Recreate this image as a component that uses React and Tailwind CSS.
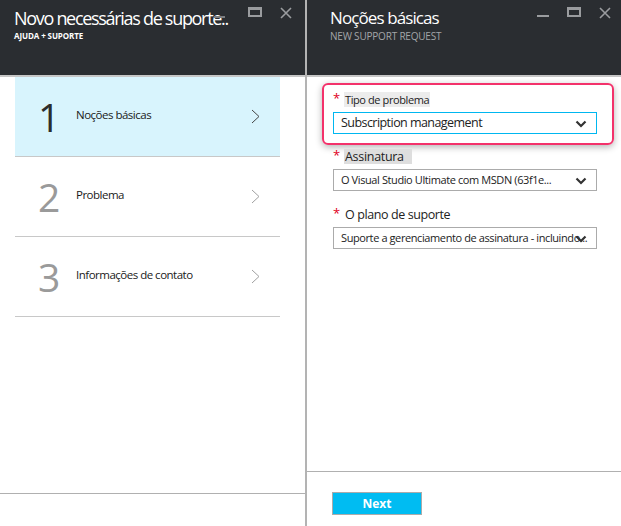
const STEPS = [
  { n: "1", label: "Noções básicas", active: true },
  { n: "2", label: "Problema" },
  { n: "3", label: "Informações de contato" },
];

const FONT = { fontFamily: '"Open Sans", "Noto Sans", sans-serif' };

function Chevron({ dim }) {
  return (
    <svg width="9" height="15" viewBox="0 0 9 15" className={dim ? "text-[#a0a0a0]" : "text-[#444]"}>
      <polyline points="1,1 8,7.5 1,14" fill="none" stroke="currentColor" strokeWidth="1" />
    </svg>
  );
}

function DownArrow() {
  return (
    <svg width="12" height="8" viewBox="0 0 12 8" className="text-[#333]">
      <polyline points="1.5,1.5 6,6 10.5,1.5" fill="none" stroke="currentColor" strokeWidth="2.2" />
    </svg>
  );
}

function WindowIcons({ minimize }) {
  return (
    <div className="flex items-start gap-[18px] pt-[7px] text-[#9a9c9f]">
      {minimize && (
        <div className="w-[12px] h-[10px] flex items-end">
          <div className="w-full h-[2px] bg-[#9a9c9f]" />
        </div>
      )}
      <div className="w-[14px] h-[10px] border-2 border-t-[3px] border-[#9a9c9f]" />
      <svg width="12" height="12" viewBox="0 0 12 12">
        <path d="M1 1 L11 11 M11 1 L1 11" stroke="currentColor" strokeWidth="1.6" />
      </svg>
    </div>
  );
}

function Field({ label, value, small, focused, hl }) {
  return (
    <div>
      <div className="flex items-start h-[18px]">
        <span className="text-[#e0001b] text-[13px] leading-none w-[11px]">*</span>
        <span className={`${hl} text-[#222] leading-[15px] px-[1px]`}>{label}</span>
      </div>
      <div
        className={`relative mt-[2px] h-[22px] w-[264px] flex items-center pl-[7px] border ${
          focused ? "border-[#00b7f0] pr-[28px]" : "border-[#ababab] pr-[2px]"
        } bg-white overflow-hidden`}
      >
        <span
          className={`${
            small ? "text-[11px] tracking-[-0.4px]" : "text-[12.5px] tracking-[-0.55px]"
          } text-[#222] whitespace-nowrap`}
        >
          {value}
        </span>
        <div className="absolute right-[9px] top-[7px]">
          <DownArrow />
        </div>
      </div>
    </div>
  );
}

export default function App() {
  return (
    <div className="w-[621px] h-[526px] flex bg-white overflow-hidden" style={FONT}>
      <section className="w-[305px] flex flex-col">
        <header className="h-[75px] bg-[#2a2d31] flex justify-between pl-[14px] pr-[13px] relative">
          <div className="pt-[6px]">
            <div className="text-white text-[18px] leading-[24px] tracking-[-1.3px] whitespace-nowrap">
              Novo necessárias de suporte..
            </div>
            <div className="text-white text-[8px] font-bold leading-[12px] tracking-[-0.1px]">AJUDA + SUPORTE</div>
          </div>
          <div className="absolute left-[214px] top-[16px] w-[11px] h-[2px] bg-[#7c7e81]" />
          <WindowIcons />
        </header>
        <div className="h-[2px] bg-[#c6c6c6]" />
        <div className="flex-1 flex flex-col pl-[15px] pr-[25px]">
          {STEPS.map((s) => (
            <div
              key={s.n}
              className={`h-[80px] flex items-center border-b border-[#c8c8c8] ${s.active ? "bg-[#d8f4fd]" : ""}`}
            >
              <div
                className={`w-[61px] pl-[23px] text-[39px] font-medium leading-none ${
                  s.active ? "text-[#2c2c2c]" : "text-[#9a9a9a]"
                }`}
              >
                {s.n}
              </div>
              <div className="flex-1 text-[11.5px] text-[#1a1a1a] tracking-[-0.5px] -mt-[4px]">{s.label}</div>
              <div className="pr-[20px]">
                <Chevron dim={!s.active} />
              </div>
            </div>
          ))}
          <div className="flex-1" />
        </div>
        <div className="h-[1px] bg-[#b0b0b0]" />
        <div className="h-[32px]" />
      </section>

      <div className="w-[2px] bg-[#b3b3b3]" />

      <section className="flex-1 flex flex-col">
        <header className="h-[75px] bg-[#2a2d31] flex justify-between pl-[23px] pr-[10px]">
          <div className="pt-[6px]">
            <div className="text-white text-[17px] leading-[24px] tracking-[-0.9px]">Noções básicas</div>
            <div className="text-[#a3a5a8] text-[10px] leading-[12px] tracking-[-0.2px]">NEW SUPPORT REQUEST</div>
          </div>
          <WindowIcons minimize />
        </header>
        <div className="h-[2px] bg-[#c6c6c6]" />
        <div className="flex-1 pl-[26px] pt-[6px]">
          <div className="ml-[-11px] w-[292px] border-2 border-[#f3326b] rounded-[6px] shadow-[0_2px_7px_rgba(0,0,0,0.3)] pl-[9px] pt-[7px] pb-[9px]">
            <Field
              label="Tipo de problema"
              value="Subscription management"
              focused
              hl="bg-[#ececec] text-[11px] tracking-[-0.4px]"
            />
          </div>
          <div className="mt-[4px] flex flex-col gap-[16px]">
            <Field
              label="Assinatura"
              value="O Visual Studio Ultimate com MSDN (63f1e..."
              small
              hl="bg-[#dedede] text-[12.5px] tracking-[-0.3px] pr-[8px]"
            />
            <Field
              label="O plano de suporte"
              value="Suporte a gerenciamento de assinatura - incluindo..."
              small
              hl="text-[12.5px] tracking-[-0.4px]"
            />
          </div>
        </div>
        <div className="h-[1px] bg-[#b0b0b0]" />
        <div className="h-[54px] pl-[25px] pt-[20px] flex items-start">
          <button className="w-[90px] h-[23px] bg-[#00bcf2] border border-[#ababab] text-white text-[12px] font-bold leading-none">
            Next
          </button>
        </div>
      </section>
    </div>
  );
}
